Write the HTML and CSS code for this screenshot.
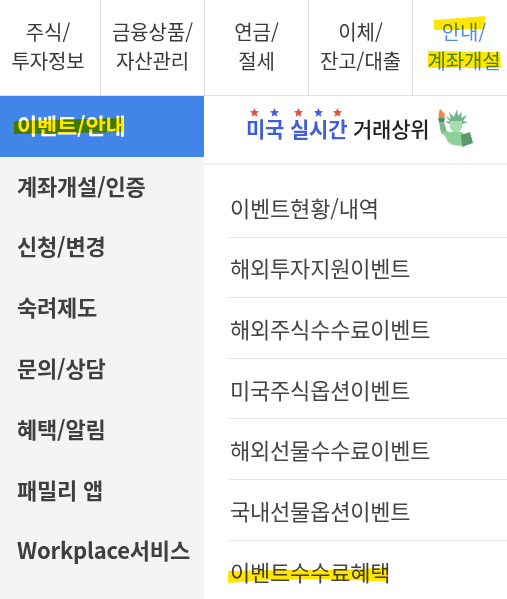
FILE: index.html
```html
<!DOCTYPE html>
<html lang="ko">
<head>
    <meta charset="UTF-8">
    <meta name="viewport" content="width=device-width, initial-scale=1.0">
    <title>전체메뉴</title>
    <link rel="stylesheet" href="styles.css">
</head>
<body>
    <div class="page">
        <nav class="tabs">
            <a class="tab tab-first">주식/<br>투자정보</a>
            <a class="tab">금융상품/<br>자산관리</a>
            <a class="tab">연금/<br>절세</a>
            <a class="tab">이체/<br>잔고/대출</a>
            <a class="tab tab-active">안내/<br>계좌개설</a>
        </nav>

        <div class="body">
            <ul class="side">
                <li class="side-item side-active">이벤트/안내</li>
                <li class="side-item">계좌개설/인증</li>
                <li class="side-item">신청/변경</li>
                <li class="side-item">숙려제도</li>
                <li class="side-item">문의/상담</li>
                <li class="side-item">혜택/알림</li>
                <li class="side-item">패밀리 앱</li>
                <li class="side-item">Workplace서비스</li>
            </ul>

            <div class="content">
                <div class="banner">
                    <span class="banner-title">
                        <span class="banner-blue">미국 실시간</span> 거래상위
                        <svg class="stars" width="96" height="9" viewBox="0 0 96 9">
                            <defs>
                                <polygon id="star" points="4.500,0 5.800,3 9,3.300 6.600,5.400 7.300,8.800 4.500,7 1.700,8.800 2.400,5.400 0,3.300 3.200,3"/>
                            </defs>
                            <use href="#star" fill="#e0523f"/>
                            <use href="#star" fill="#4a5fe0" x="20"/>
                            <use href="#star" fill="#e0523f" x="44"/>
                            <use href="#star" fill="#4a5fe0" x="64"/>
                            <use href="#star" fill="#e0523f" x="83"/>
                        </svg>
                    </span>
                    <svg class="liberty" width="38" height="40" viewBox="0 0 38 40">
                        <path fill="#ee8a45" d="M5 1c2 1 3 3 3 4l1-1c1 2 1 5 0 6H4C3 7 4 4 5 1z"/>
                        <path fill="#4f8f63" d="M3 10h7l-1 4H4z"/>
                        <path fill="#7cbb8c" d="M4 14h5l3 10-6 1z"/>
                        <path fill="#6fb684" d="M22 1l1 7 4-4-1 6 6-3-4 6 5 1-6 2H15l-5-2 5-1-5-5 6 3-2-7 5 5z"/>
                        <path fill="#a8dcb0" d="M15 13h12v7l-3 4h-6l-3-4z"/>
                        <path fill="#8fd09b" d="M6 25l6-2 3 1h12l3 3-1 8-3 3-8-1-5-3-3-6z"/>
                        <path fill="#5a9a6c" d="M26 27l9-3 3 11-11 4z"/>
                    </svg>
                </div>
                <ul class="links">
                    <li class="link">이벤트현황/내역</li>
                    <li class="link">해외투자지원이벤트</li>
                    <li class="link">해외주식수수료이벤트</li>
                    <li class="link">미국주식옵션이벤트</li>
                    <li class="link">해외선물수수료이벤트</li>
                    <li class="link">국내선물옵션이벤트</li>
                    <li class="link">이벤트수수료혜택</li>
                </ul>
            </div>
        </div>

        <!-- marker strokes drawn over the screenshot -->
        <svg class="marks" width="507" height="599" viewBox="0 0 507 599">
            <path d="M434 20l51-4-1 13-50 1z"/>
            <path d="M428 51l72 1 1 16-73 0z"/>
            <path d="M14 121l109-3 0 14-109 2z"/>
            <path d="M228 571c40-1 60-1 90-1 25 0 50-1 70-3l0 15c-30-2-50-3-75-3-30 0-60 2-85 4z"/>
        </svg>
    </div>
</body>
</html>
```

FILE: styles.css
```css
* {
    margin: 0;
    padding: 0;
    box-sizing: border-box;
}

body {
    background: #fff;
    color: #333;
    font-family: "Noto Sans CJK KR", "Noto Sans", sans-serif;
    overflow: hidden;
}

.page {
    position: relative;
    width: 507px;
    height: 599px;
    overflow: hidden;
}

.tabs {
    display: grid;
    grid-template-columns: 101px 104px 104px 104px 94px;
    height: 96px;
    border-bottom: 1px solid #e0e0e0;
}

.tab {
    display: flex;
    align-items: center;
    justify-content: center;
    text-align: center;
    font-size: 20px;
    line-height: 29px;
    letter-spacing: -0.1px;
    color: #3a3a3a;
    border-right: 1px solid #e0e0e0;
    padding-bottom: 4px;
}

.tab-first {
    padding-right: 4px;
}

.tab-active {
    border-right: 0;
    color: #4a8cf0;
    padding-left: 8px;
}

.body {
    display: flex;
    height: 503px;
}

.side {
    width: 204px;
    flex-shrink: 0;
    list-style: none;
    background: #f4f4f4;
}

.side-item {
    display: flex;
    align-items: center;
    height: 60.8px;
    padding-left: 17px;
    padding-bottom: 5px;
    font-size: 22px;
    font-weight: 700;
    letter-spacing: -0.2px;
    color: #3f3f3f;
    white-space: nowrap;
}

.side-active {
    background: #4285e8;
    color: #fff;
}

.content {
    flex: 1;
    min-width: 0;
}

.banner {
    display: flex;
    align-items: center;
    justify-content: flex-start;
    gap: 6px;
    height: 69px;
    padding-left: 42px;
    padding-bottom: 3px;
    border-bottom: 2px solid #eee;
}

.banner-title {
    position: relative;
    top: 0;
    font-size: 21px;
    font-weight: 500;
    letter-spacing: -0.2px;
    color: #222;
    white-space: nowrap;
}

.banner-blue {
    color: #3f5fd8;
    font-weight: 700;
}

.stars {
    position: absolute;
    left: 4px;
    top: -5px;
}

.links {
    list-style: none;
    margin-left: 25px;
    padding-top: 12px;
}

.link {
    display: flex;
    align-items: center;
    height: 60.6px;
    padding-left: 1px;
    font-size: 22px;
    letter-spacing: -0.2px;
    color: #444;
    border-bottom: 1px solid #e4e4e4;
    white-space: nowrap;
}

.link:last-child {
    border-bottom: 0;
}

.marks {
    position: absolute;
    top: 0;
    left: 0;
    mix-blend-mode: multiply;
    pointer-events: none;
}

.marks path {
    fill: #ffe600;
}
```
